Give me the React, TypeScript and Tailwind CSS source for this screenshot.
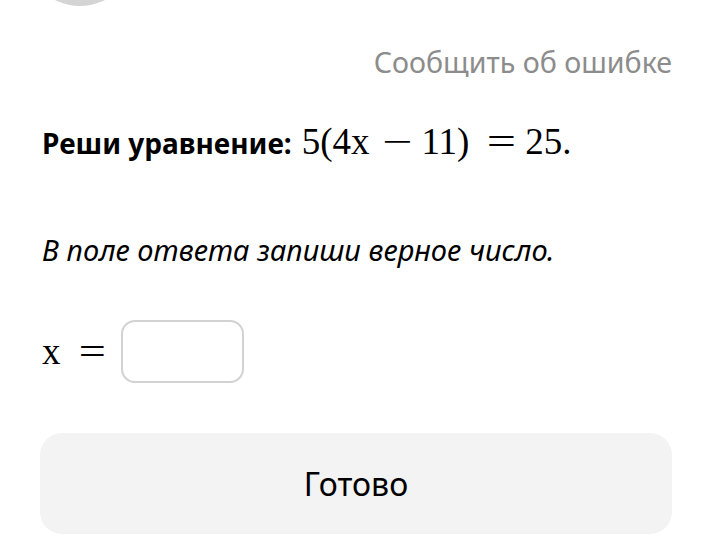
export default function App() {
  return (
    <div className="flex h-[559px] w-[716px] flex-col overflow-hidden bg-white font-['Noto_Sans',sans-serif] text-black">
      <div className="ml-[25px] mt-[-104px] h-[110px] w-[110px] shrink-0 rounded-full bg-[#d4d4d4]" />

      <div className="mt-[37px] flex justify-end pr-[44px]">
        <span className="text-[28.6px] leading-[38px] text-[#8c8c8c]">Сообщить об ошибке</span>
      </div>

      <div className="mt-[41px] flex items-baseline pl-[42px]">
        <span className="text-[28px] font-bold leading-[40px]">Реши уравнение:</span>
        <span className="ml-[10px] font-['Liberation_Serif',serif] text-[37px] leading-[40px]">
          <span>5(4x</span>
          <span className="ml-[17px] inline-block scale-x-[1.45]">−</span>
          <span className="ml-[14px]">11)</span>
          <span className="ml-[22px] inline-block scale-x-[1.4]">=</span>
          <span className="ml-[13px]">25.</span>
        </span>
      </div>

      <p className="mt-[68px] pl-[42px] text-[29px] italic leading-[38px]">
        В поле ответа запиши верное число.
      </p>

      <div className="mt-[51px] flex items-center pl-[42px]">
        <span className="font-['Liberation_Serif',serif] text-[37px] leading-[40px]">
          <span>x</span>
          <span className="ml-[21px] inline-block scale-x-[1.3]">=</span>
        </span>
        <div className="ml-[19px] h-[63px] w-[123px] rounded-[14px] border-2 border-[#d2d2d2] bg-white" />
      </div>

      <div className="mt-[50px] flex px-[40px]">
        <button className="flex h-[101px] w-[632px] items-center justify-center rounded-[22px] bg-[#f3f3f3] text-[32px] leading-[40px] text-black">
          Готово
        </button>
      </div>
    </div>
  );
}
